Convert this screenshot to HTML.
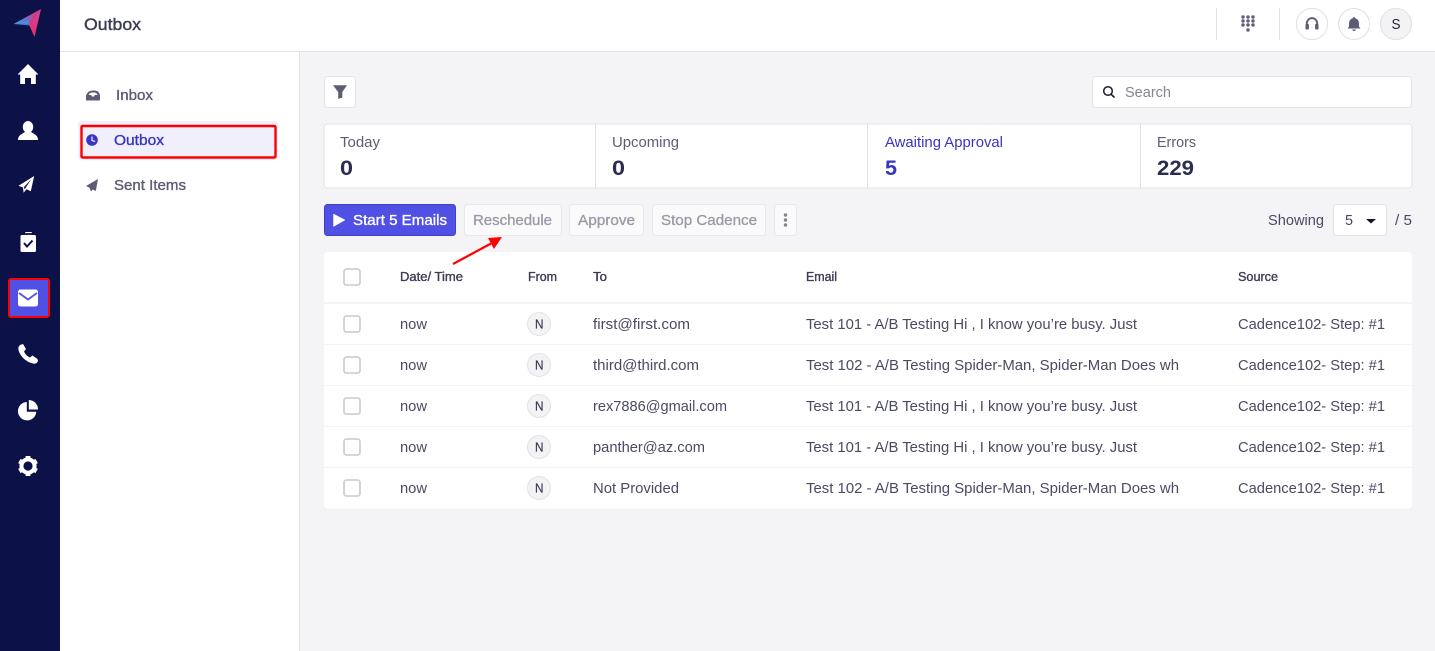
<!DOCTYPE html>
<html>
<head>
<meta charset="utf-8">
<style>
html,body{margin:0;padding:0;width:1435px;height:651px;overflow:hidden;background:#f4f4f6}
svg{display:block}
text{font-family:"Liberation Sans",sans-serif;white-space:pre}
.r{font-size:14.7px;fill:#4a4a63}
.s{font-size:14.7px}
.m{font-size:14.7px;stroke-width:.35px}
.h{font-size:12.6px;fill:#3b3b55;stroke:#3b3b55;stroke-width:.35px}
.g{font-size:14.7px;fill:#9a9aa8;stroke:#9a9aa8;stroke-width:.3px}
.b{font-size:21px;font-weight:bold;fill:#2c2c50}
.box{fill:#fafafb;stroke:#e8e8ec}
.cb{fill:#fff;stroke:#c9c9cf;stroke-width:1.6}
</style>
</head>
<body>
<svg width="1435" height="651" viewBox="0 0 1435 651" xmlns="http://www.w3.org/2000/svg">
<defs>
<linearGradient id="lg" gradientUnits="userSpaceOnUse" x1="14" y1="24" x2="41" y2="12">
<stop offset="0" stop-color="#4a9be8"/><stop offset=".4" stop-color="#5f78d0"/><stop offset=".7" stop-color="#c0468f"/><stop offset="1" stop-color="#e8408a"/>
</linearGradient>
<linearGradient id="lg2" gradientUnits="userSpaceOnUse" x1="36" y1="14" x2="33" y2="37">
<stop offset="0" stop-color="#d84090"/><stop offset="1" stop-color="#e0306e"/>
</linearGradient>
</defs>

<rect width="1435" height="651" fill="#f4f4f6"/>
<!-- top bar -->
<rect x="60" y="0" width="1375" height="51" fill="#fff"/>
<rect x="60" y="51" width="1375" height="1" fill="#e3e3e6"/>
<!-- left nav -->
<rect x="60" y="52" width="239" height="599" fill="#fff"/>
<rect x="299" y="52" width="1" height="599" fill="#e3e3e6"/>
<!-- sidebar -->
<rect x="0" y="0" width="60" height="651" fill="#0c1148"/>

<!-- logo -->
<path d="M41 9 L34.500 37 L28.500 23.500 Z" fill="url(#lg2)"/>
<path d="M13.500 24 L41 9 L28.500 23.500 Z" fill="url(#lg)"/>
<path d="M13.500 24 L28.500 21 L29.500 25.500 Z" fill="#4a8fe0" opacity=".85"/>

<!-- home -->
<path d="M28 64 L38.400 74.500 L35.800 74.500 L35.800 84 L31 84 L31 78 L25 78 L25 84 L20.200 84 L20.200 74.500 L17.600 74.500 Z" fill="#fff"/>
<!-- user -->
<ellipse cx="28" cy="127" rx="5.200" ry="6" fill="#fff"/>
<path d="M18 140 C18 135.500 21 134.500 25 132 L31 132 C35 134.500 38 135.500 38 140 Z" fill="#fff"/>
<!-- send -->
<path d="M34.200 176 L18.500 185.800 L23 187.500 L23.600 192.800 L26.500 189.300 L30.800 191.200 Z M31 179.500 L24 187 L24.600 189.500 Z" fill="#fff" fill-rule="evenodd"/>
<!-- clipboard -->
<path d="M22 235 L25 235 L25 233 Q25 232 26 232 L31 232 Q32 232 32 233 L32 235 L34.500 235 Q36 235 36 236.500 L36 250.500 Q36 252 34.500 252 L22 252 Q20.500 252 20.500 250.500 L20.500 236.500 Q20.500 235 22 235 Z" fill="#fff"/>
<rect x="25" y="233" width="7" height="2" fill="#0c1148" opacity=".9"/>
<path d="M24 243 L27 246.500 L32.500 240.500" fill="none" stroke="#0c1148" stroke-width="2"/>

<!-- active mail -->
<rect x="9" y="279" width="40" height="38" rx="2" fill="#5050e5" stroke="#ff0000" stroke-width="2"/>
<rect x="18" y="289.500" width="20" height="17" rx="2.500" fill="#fff"/>
<path d="M19 293 L28 299.500 L37 293" fill="none" stroke="#5050e5" stroke-width="1.800"/>

<!-- phone -->
<path d="M20 345 Q17.800 347 18.500 350 C20 356 26 362 33 363.500 Q36.500 364.500 38 361 L37.500 359 L32.500 355.500 L30 357.500 C27.500 356.500 25 354 24 351.500 L26 349 L23 344 Z" fill="#fff"/>
<!-- pie -->
<path d="M26.800 402 A9.200 9.200 0 1 0 36.300 411.800 L26.800 411.800 Z" fill="#fff"/>
<path d="M28.800 400 A9.300 9.300 0 0 1 38 409.500 L28.800 409.500 Z" fill="#fff"/>
<!-- gear -->
<circle cx="28" cy="466" r="6.600" fill="none" stroke="#fff" stroke-width="4"/>
<g fill="#fff">
<rect x="25.600" y="456" width="4.800" height="4"/><rect x="25.600" y="472" width="4.800" height="4"/>
<rect x="25.600" y="456" width="4.800" height="4" transform="rotate(60 28 466)"/>
<rect x="25.600" y="456" width="4.800" height="4" transform="rotate(120 28 466)"/>
<rect x="25.600" y="456" width="4.800" height="4" transform="rotate(240 28 466)"/>
<rect x="25.600" y="456" width="4.800" height="4" transform="rotate(300 28 466)"/>
</g>

<!-- top bar -->
<text x="84" y="30" font-size="16.800" fill="#3b3b55" stroke="#3b3b55" stroke-width=".4" textLength="57" lengthAdjust="spacingAndGlyphs">Outbox</text>
<rect x="1216" y="8" width="1" height="32" fill="#e3e3e6"/>
<rect x="1279" y="8" width="1" height="32" fill="#e3e3e6"/>
<g fill="#5c5c75">
<circle cx="1243" cy="17" r="1.700"/><circle cx="1248" cy="17" r="1.700"/><circle cx="1253" cy="17" r="1.700"/>
<circle cx="1243" cy="21" r="1.700"/><circle cx="1248" cy="21" r="1.700"/><circle cx="1253" cy="21" r="1.700"/>
<circle cx="1243" cy="25" r="1.700"/><circle cx="1248" cy="25" r="1.700"/><circle cx="1253" cy="25" r="1.700"/>
<circle cx="1248" cy="30" r="1.700"/>
</g>
<circle cx="1312" cy="24" r="15.500" fill="#fff" stroke="#e0e0e4"/>
<circle cx="1354" cy="24" r="15.500" fill="#fff" stroke="#e0e0e4"/>
<circle cx="1396" cy="24" r="15.500" fill="#f3f3f5" stroke="#e0e0e4"/>
<path d="M1306.800 27 L1306.800 23.500 A5.200 5.500 0 0 1 1317.200 23.500 L1317.200 27" fill="none" stroke="#5c5c75" stroke-width="1.900"/>
<rect x="1305.500" y="24" width="3.400" height="5.500" rx="1" fill="#5c5c75"/>
<rect x="1315.100" y="24" width="3.400" height="5.500" rx="1" fill="#5c5c75"/>
<path d="M1354 17 Q1355 17 1355.300 18.300 Q1359 19.500 1359 24 L1359 26.500 L1360.500 28.500 L1347.500 28.500 L1349 26.500 L1349 24 Q1349 19.500 1352.700 18.300 Q1353 17 1354 17 Z" fill="#5c5c75"/>
<path d="M1352 29.500 L1356 29.500 Q1355.500 31 1354 31 Q1352.500 31 1352 29.500 Z" fill="#5c5c75"/>
<text x="1391.500" y="29" font-size="14.700" fill="#22223a" textLength="9" lengthAdjust="spacingAndGlyphs">S</text>

<!-- left nav items -->
<path d="M86 100 L86 95.500 Q88 90.500 92.500 90.500 L95 90.500 Q99 90.500 100 95.500 L100 100 Q100 100.500 99 100.500 L87 100.500 Q86 100.500 86 100 Z" fill="#5c5c75"/>
<path d="M88.500 95 Q90 92.500 92.500 92.500 L94 92.500 Q96.500 92.500 97.500 95 L95 95 L94 96.500 L92 96.500 L91 95 Z" fill="#fff"/>
<text x="116" y="100" class="m" fill="#5c5c75" stroke="#5c5c75" textLength="37" lengthAdjust="spacingAndGlyphs">Inbox</text>
<rect x="78" y="121" width="200" height="39" rx="3" fill="#f0effb"/>
<rect x="81.500" y="126" width="194" height="31.500" fill="#f0effb" stroke="#ff0000" stroke-width="2.400" rx="1"/>
<circle cx="92" cy="140" r="5.800" fill="#3a35c0"/>
<path d="M92 136.500 L92 140.500 L95 141.500" fill="none" stroke="#f0effb" stroke-width="1.200"/>
<text x="114" y="145" class="m" fill="#3a35c0" stroke="#3a35c0" textLength="50" lengthAdjust="spacingAndGlyphs">Outbox</text>
<path d="M98 179 L86 186 L89.500 187.800 L91 191.500 L92.800 189.500 L95.800 191 Z" fill="#5c5c75"/>
<text x="114" y="190" class="m" fill="#5c5c75" stroke="#5c5c75" textLength="72" lengthAdjust="spacingAndGlyphs">Sent Items</text>

<!-- filter -->
<rect x="324.500" y="76.500" width="31" height="31" rx="3" fill="#fff" stroke="#e3e3e6"/>
<path d="M333.500 85.500 L346.500 85.500 L342 92 L342 97.500 L338.500 98.500 L338.500 92 Z" fill="#5c5c75" stroke="#5c5c75" stroke-width=".6" stroke-linejoin="round"/>

<!-- search -->
<rect x="1092.500" y="76.500" width="319" height="31" rx="3" fill="#fff" stroke="#e3e3e6"/>
<circle cx="1108" cy="91" r="4.300" fill="none" stroke="#1c1c2c" stroke-width="1.500"/>
<path d="M1111 94.200 L1114.500 97.500" stroke="#1c1c2c" stroke-width="1.600"/>
<text x="1125" y="97" class="s" fill="#85858f" textLength="46" lengthAdjust="spacingAndGlyphs">Search</text>

<!-- stats -->
<rect x="324" y="124" width="1088" height="64" rx="4" fill="#fff" stroke="#e3e3e6" stroke-width="1"/>
<rect x="595" y="124" width="1" height="64" fill="#e3e3e6"/>
<rect x="867" y="124" width="1" height="64" fill="#e3e3e6"/>
<rect x="1140" y="124" width="1" height="64" fill="#e3e3e6"/>
<text x="340" y="147" class="s" fill="#5c5c75" textLength="40" lengthAdjust="spacingAndGlyphs">Today</text>
<text x="340" y="175" class="b" textLength="13" lengthAdjust="spacingAndGlyphs">0</text>
<text x="612" y="147" class="s" fill="#5c5c75" textLength="67" lengthAdjust="spacingAndGlyphs">Upcoming</text>
<text x="612" y="175" class="b" textLength="13" lengthAdjust="spacingAndGlyphs">0</text>
<text x="885" y="147" class="s" fill="#3a35c0" textLength="118" lengthAdjust="spacingAndGlyphs">Awaiting Approval</text>
<text x="885" y="175" class="b" style="fill:#3a35c0" textLength="12" lengthAdjust="spacingAndGlyphs">5</text>
<text x="1157" y="147" class="s" fill="#5c5c75" textLength="39" lengthAdjust="spacingAndGlyphs">Errors</text>
<text x="1157" y="175" class="b" textLength="37" lengthAdjust="spacingAndGlyphs">229</text>

<!-- actions -->
<rect x="324.500" y="204.500" width="131" height="31" rx="3" fill="#5050e5" stroke="#3f3fc8"/>
<path d="M333.500 214 L345 220 L333.500 226.500 Z" fill="#fff" stroke="#fff" stroke-width=".5"/>
<text x="353" y="225" class="s" fill="#fff" stroke="#fff" stroke-width=".35" textLength="94" lengthAdjust="spacingAndGlyphs">Start 5 Emails</text>
<rect class="box" x="464.500" y="204.500" width="97" height="31" rx="3"/>
<text x="473" y="225" class="g" textLength="79" lengthAdjust="spacingAndGlyphs">Reschedule</text>
<rect class="box" x="569.500" y="204.500" width="74" height="31" rx="3"/>
<text x="578" y="225" class="g" textLength="57" lengthAdjust="spacingAndGlyphs">Approve</text>
<rect class="box" x="652.500" y="204.500" width="113" height="31" rx="3"/>
<text x="661" y="225" class="g" textLength="96" lengthAdjust="spacingAndGlyphs">Stop Cadence</text>
<rect class="box" x="774.500" y="204.500" width="22" height="31" rx="3"/>
<g fill="#85858f"><circle cx="785.500" cy="215" r="1.700"/><circle cx="785.500" cy="220" r="1.700"/><circle cx="785.500" cy="225" r="1.700"/></g>

<text x="1268" y="225" class="s" fill="#4a4a63" textLength="56" lengthAdjust="spacingAndGlyphs">Showing</text>
<rect x="1333.500" y="204.500" width="53" height="31" rx="3" fill="#fff" stroke="#e3e3e6"/>
<text x="1345" y="225" class="s" fill="#4a4a63" textLength="8" lengthAdjust="spacingAndGlyphs">5</text>
<path d="M1366 219 L1376 219 L1371 223.500 Z" fill="#15152a"/>
<text x="1395" y="225" class="s" fill="#4a4a63" textLength="17" lengthAdjust="spacingAndGlyphs">/ 5</text>

<!-- table -->
<rect x="324" y="252" width="1088" height="256.500" rx="4" fill="#fff"/>
<rect x="324" y="302" width="1088" height="2" fill="#f4f4f6"/>
<rect x="324" y="344" width="1088" height="1" fill="#f3f3f5"/>
<rect x="324" y="385" width="1088" height="1" fill="#f3f3f5"/>
<rect x="324" y="426" width="1088" height="1" fill="#f3f3f5"/>
<rect x="324" y="467" width="1088" height="1" fill="#f3f3f5"/>

<!-- arrow -->
<path d="M453 264 L491 243.500" stroke="#ff0000" stroke-width="2.200" fill="none"/>
<path d="M502 237 L488 238 L494 249 Z" fill="#ff0000"/>

<rect class="cb" x="344" y="269" width="16" height="16" rx="2.500"/>
<text x="400" y="281" class="h" textLength="63" lengthAdjust="spacingAndGlyphs">Date/ Time</text>
<text x="528" y="281" class="h" textLength="29" lengthAdjust="spacingAndGlyphs">From</text>
<text x="593" y="281" class="h" textLength="14" lengthAdjust="spacingAndGlyphs">To</text>
<text x="806" y="281" class="h" textLength="31" lengthAdjust="spacingAndGlyphs">Email</text>
<text x="1238" y="281" class="h" textLength="40" lengthAdjust="spacingAndGlyphs">Source</text>

<!-- row 1 -->
<rect class="cb" x="344" y="316" width="16" height="16" rx="2.500"/>
<text x="400" y="329" class="r" textLength="27" lengthAdjust="spacingAndGlyphs">now</text>
<circle cx="539" cy="324" r="11.500" fill="#f3f3f5" stroke="#e3e3e6"/>
<text x="535" y="328.500" font-size="12.600" fill="#3b3b55" stroke="#3b3b55" stroke-width=".2" textLength="8.500" lengthAdjust="spacingAndGlyphs">N</text>
<text x="593" y="329" class="r" textLength="97" lengthAdjust="spacingAndGlyphs">first@first.com</text>
<text x="806" y="329" class="r" textLength="331" lengthAdjust="spacingAndGlyphs">Test 101 - A/B Testing Hi , I know you’re busy. Just</text>
<text x="1238" y="329" class="r" textLength="147" lengthAdjust="spacingAndGlyphs">Cadence102- Step: #1</text>

<!-- row 2 -->
<rect class="cb" x="344" y="357" width="16" height="16" rx="2.500"/>
<text x="400" y="370" class="r" textLength="27" lengthAdjust="spacingAndGlyphs">now</text>
<circle cx="539" cy="365" r="11.500" fill="#f3f3f5" stroke="#e3e3e6"/>
<text x="535" y="369.500" font-size="12.600" fill="#3b3b55" stroke="#3b3b55" stroke-width=".2" textLength="8.500" lengthAdjust="spacingAndGlyphs">N</text>
<text x="593" y="370" class="r" textLength="106" lengthAdjust="spacingAndGlyphs">third@third.com</text>
<text x="806" y="370" class="r" textLength="373" lengthAdjust="spacingAndGlyphs">Test 102 - A/B Testing Spider-Man, Spider-Man Does wh</text>
<text x="1238" y="370" class="r" textLength="147" lengthAdjust="spacingAndGlyphs">Cadence102- Step: #1</text>

<!-- row 3 -->
<rect class="cb" x="344" y="398" width="16" height="16" rx="2.500"/>
<text x="400" y="411" class="r" textLength="27" lengthAdjust="spacingAndGlyphs">now</text>
<circle cx="539" cy="406" r="11.500" fill="#f3f3f5" stroke="#e3e3e6"/>
<text x="535" y="410.500" font-size="12.600" fill="#3b3b55" stroke="#3b3b55" stroke-width=".2" textLength="8.500" lengthAdjust="spacingAndGlyphs">N</text>
<text x="593" y="411" class="r" textLength="134" lengthAdjust="spacingAndGlyphs">rex7886@gmail.com</text>
<text x="806" y="411" class="r" textLength="331" lengthAdjust="spacingAndGlyphs">Test 101 - A/B Testing Hi , I know you’re busy. Just</text>
<text x="1238" y="411" class="r" textLength="147" lengthAdjust="spacingAndGlyphs">Cadence102- Step: #1</text>

<!-- row 4 -->
<rect class="cb" x="344" y="439" width="16" height="16" rx="2.500"/>
<text x="400" y="452" class="r" textLength="27" lengthAdjust="spacingAndGlyphs">now</text>
<circle cx="539" cy="447" r="11.500" fill="#f3f3f5" stroke="#e3e3e6"/>
<text x="535" y="451.500" font-size="12.600" fill="#3b3b55" stroke="#3b3b55" stroke-width=".2" textLength="8.500" lengthAdjust="spacingAndGlyphs">N</text>
<text x="593" y="452" class="r" textLength="112" lengthAdjust="spacingAndGlyphs">panther@az.com</text>
<text x="806" y="452" class="r" textLength="331" lengthAdjust="spacingAndGlyphs">Test 101 - A/B Testing Hi , I know you’re busy. Just</text>
<text x="1238" y="452" class="r" textLength="147" lengthAdjust="spacingAndGlyphs">Cadence102- Step: #1</text>

<!-- row 5 -->
<rect class="cb" x="344" y="480" width="16" height="16" rx="2.500"/>
<text x="400" y="493" class="r" textLength="27" lengthAdjust="spacingAndGlyphs">now</text>
<circle cx="539" cy="488" r="11.500" fill="#f3f3f5" stroke="#e3e3e6"/>
<text x="535" y="492.500" font-size="12.600" fill="#3b3b55" stroke="#3b3b55" stroke-width=".2" textLength="8.500" lengthAdjust="spacingAndGlyphs">N</text>
<text x="593" y="493" class="r" textLength="86" lengthAdjust="spacingAndGlyphs">Not Provided</text>
<text x="806" y="493" class="r" textLength="373" lengthAdjust="spacingAndGlyphs">Test 102 - A/B Testing Spider-Man, Spider-Man Does wh</text>
<text x="1238" y="493" class="r" textLength="147" lengthAdjust="spacingAndGlyphs">Cadence102- Step: #1</text>
</svg>
</body>
</html>
